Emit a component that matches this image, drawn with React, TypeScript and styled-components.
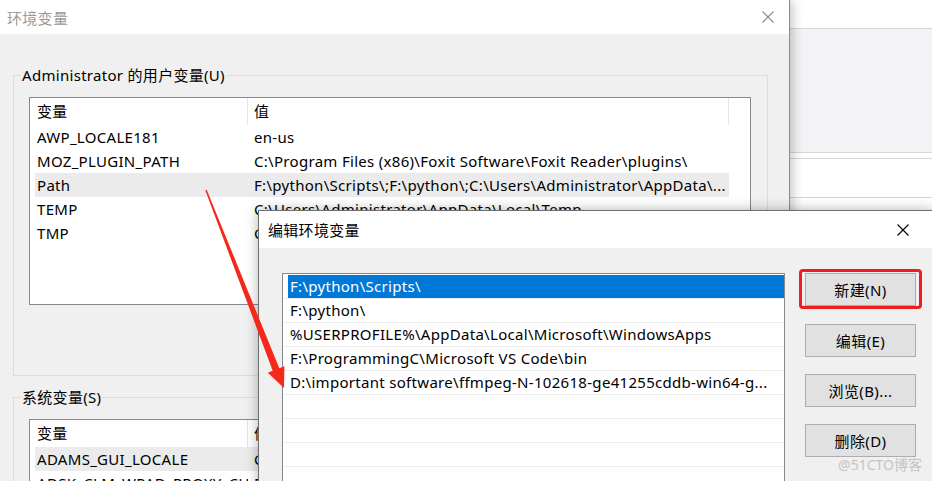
import React from 'react';
import styled, { createGlobalStyle } from 'styled-components';

const UI_FONT = `"Noto Sans", "Noto Sans CJK SC", sans-serif`;

const GlobalStyle = createGlobalStyle`
  html, body {
    margin: 0;
    padding: 0;
    background: #fff;
  }
  body {
    font-family: ${UI_FONT};
    font-size: 15px;
    letter-spacing: 0.3px;
    color: #000;
  }
  * {
    box-sizing: border-box;
  }
`;

const Desktop = styled.div`
  position: relative;
  width: 932px;
  height: 481px;
  overflow: hidden;
  background: #fff;
`;

/* window peeking out on the right, behind everything */
const BackWindow = styled.div`
  position: absolute;
  left: 760px;
  top: 0;
  width: 200px;
  height: 230px;
  background: #fff;
  display: flex;
  flex-direction: column;
`;

const BackStrip = styled.div<{ $h: number; $bg?: string }>`
  flex-shrink: 0;
  height: ${p => p.$h}px;
  background: ${p => p.$bg || '#fff'};
  border-bottom: 1px solid #d6d6d6;
`;

const MainWindow = styled.div`
  position: absolute;
  left: 0;
  top: 0;
  width: 790px;
  height: 530px;
  background: #f0f0f0;
  border-right: 1px solid #8a8a8a;
  box-shadow: 3px 0 10px rgba(0, 0, 0, 0.22);
  display: flex;
  flex-direction: column;
`;

const TitleBar = styled.div<{ $h: number; $inactive?: boolean; $pl: number; $pr: number }>`
  flex-shrink: 0;
  height: ${p => p.$h}px;
  background: #fff;
  display: flex;
  align-items: center;
  justify-content: space-between;
  padding: 0 ${p => p.$pr}px 0 ${p => p.$pl}px;
  color: ${p => (p.$inactive ? '#9a9a9a' : '#000')};
  font-size: 15px;
`;

const CloseIcon = ({ color }: { color: string }) => (
  <svg width="12" height="12" viewBox="0 0 12 12">
    <path d="M0.5 0.5 L11.5 11.5 M11.5 0.5 L0.5 11.5" stroke={color} strokeWidth="1.1" fill="none" />
  </svg>
);

const MainBody = styled.div`
  flex: 1;
  padding: 31px 0 0 13px;
  display: flex;
  flex-direction: column;
  gap: 11px;
`;

const GroupBox = styled.fieldset<{ $pb: number }>`
  margin: 0;
  width: 755px;
  min-inline-size: 0;
  border: 1px solid #dcdcdc;
  padding: 12px 16px ${p => p.$pb}px 15px;
`;

const GroupTitle = styled.legend`
  padding: 0 2px;
  margin-left: -9px;
  line-height: 20px;
  font-size: 15px;
`;

const ListView = styled.div<{ $h: number }>`
  width: 722px;
  height: ${p => p.$h}px;
  background: #fff;
  border: 1px solid #828790;
  overflow: hidden;
`;

const HeaderRow = styled.div`
  display: grid;
  grid-template-columns: 218px 481px 1fr;
  height: 27px;
`;

const HeaderCell = styled.div<{ $pl: number }>`
  padding-left: ${p => p.$pl}px;
  line-height: 27px;
  border-right: 1px solid #e5e5e5;
  &:last-child {
    border-right: none;
  }
`;

const VarRow = styled.div<{ $selected?: boolean }>`
  display: grid;
  grid-template-columns: 213px 1fr;
  margin-left: 5px;
  width: 694px;
  height: 24px;
  line-height: 24px;
  background: ${p => (p.$selected ? '#ebebeb' : 'transparent')};
`;

const VarCell = styled.div<{ $pl: number }>`
  padding-left: ${p => p.$pl}px;
  white-space: nowrap;
  overflow: hidden;
`;

/* front dialog */
const EditDialog = styled.div`
  position: absolute;
  left: 258px;
  top: 210px;
  width: 676px;
  height: 300px;
  background: #f0f0f0;
  border: 1px solid #6f6f6f;
  box-shadow: 0 0 12px rgba(0, 0, 0, 0.3);
  display: flex;
  flex-direction: column;
`;

const EditBody = styled.div`
  flex: 1;
  display: flex;
  gap: 20px;
  padding: 25px 0 0 23px;
`;

const PathList = styled.div`
  width: 503px;
  height: 240px;
  background: #fff;
  border: 1px solid #828790;
  padding-top: 1px;
`;

const PathRow = styled.div`
  height: 24px;
  border-bottom: 1px solid #ececec;
`;

const PathText = styled.div<{ $selected?: boolean }>`
  margin-left: 5px;
  height: 23px;
  line-height: 23px;
  padding-left: 2px;
  white-space: nowrap;
  overflow: hidden;
  background: ${p => (p.$selected ? '#0078d7' : 'transparent')};
  color: ${p => (p.$selected ? '#fff' : '#000')};
`;

const ButtonColumn = styled.div`
  display: flex;
  flex-direction: column;
  gap: 17px;
`;

const DialogButton = styled.button<{ $marked?: boolean }>`
  position: relative;
  width: 111px;
  height: 33px;
  padding: 0;
  background: #e1e1e1;
  border: 1px solid #adadad;
  font-family: ${UI_FONT};
  font-size: 15px;
  letter-spacing: 0.4px;
  color: #000;
  &:first-child {
    margin-bottom: 1px;
  }
  ${p =>
    p.$marked &&
    `
    &::after {
      content: '';
      position: absolute;
      top: -5px;
      left: -7px;
      right: -7px;
      bottom: -4px;
      border: 3px solid #f21c1c;
      border-radius: 4px;
    }
  `}
`;

const Watermark = styled.div`
  position: absolute;
  right: 10px;
  top: 454px;
  font-size: 14px;
  letter-spacing: 0;
  color: #c4c4c4;
`;

const Annotation = styled.svg`
  position: absolute;
  left: 0;
  top: 0;
  pointer-events: none;
`;

const userVars = [
  { name: 'AWP_LOCALE181', value: 'en-us' },
  { name: 'MOZ_PLUGIN_PATH', value: 'C:\\Program Files (x86)\\Foxit Software\\Foxit Reader\\plugins\\' },
  { name: 'Path', value: 'F:\\python\\Scripts\\;F:\\python\\;C:\\Users\\Administrator\\AppData\\...', selected: true },
  { name: 'TEMP', value: 'C:\\Users\\Administrator\\AppData\\Local\\Temp' },
  { name: 'TMP', value: 'C:\\Users\\Administrator\\AppData\\Local\\Temp' },
];

const systemVars = [
  { name: 'ADAMS_GUI_LOCALE', value: 'CHS', selected: true },
  { name: 'ADSK_CLM_WPAD_PROXY_CHECK', value: 'FALSE' },
];

const paths = [
  'F:\\python\\Scripts\\',
  'F:\\python\\',
  '%USERPROFILE%\\AppData\\Local\\Microsoft\\WindowsApps',
  'F:\\ProgrammingC\\Microsoft VS Code\\bin',
  'D:\\important software\\ffmpeg-N-102618-ge41255cddb-win64-g...',
  '',
  '',
  '',
  '',
];

const VarTable = ({ rows, height }: { rows: { name: string; value: string; selected?: boolean }[]; height: number }) => (
  <ListView $h={height}>
    <HeaderRow>
      <HeaderCell $pl={7}>变量</HeaderCell>
      <HeaderCell $pl={6}>值</HeaderCell>
      <HeaderCell $pl={0} />
    </HeaderRow>
    {rows.map(r => (
      <VarRow key={r.name} $selected={r.selected}>
        <VarCell $pl={2}>{r.name}</VarCell>
        <VarCell $pl={6}>{r.value}</VarCell>
      </VarRow>
    ))}
  </ListView>
);

export default function App() {
  return (
    <Desktop>
      <GlobalStyle />

      <BackWindow>
        <BackStrip $h={29} />
        <BackStrip $h={124} $bg="#f3f3f5" />
        <BackStrip $h={6} />
        <BackStrip $h={39} />
      </BackWindow>

      <MainWindow>
        <TitleBar $h={34} $inactive $pl={7} $pr={15}>
          <span>环境变量</span>
          <CloseIcon color="#8c8c8c" />
        </TitleBar>
        <MainBody>
          <GroupBox $pb={70}>
            <GroupTitle>Administrator 的用户变量(U)</GroupTitle>
            <VarTable rows={userVars} height={208} />
          </GroupBox>
          <GroupBox $pb={40}>
            <GroupTitle>系统变量(S)</GroupTitle>
            <VarTable rows={systemVars} height={120} />
          </GroupBox>
        </MainBody>
      </MainWindow>

      <EditDialog>
        <TitleBar $h={37} $pl={9} $pr={24}>
          <span>编辑环境变量</span>
          <CloseIcon color="#000" />
        </TitleBar>
        <EditBody>
          <PathList>
            {paths.map((p, i) => (
              <PathRow key={i}>
                <PathText $selected={i === 0}>{p}</PathText>
              </PathRow>
            ))}
          </PathList>
          <ButtonColumn>
            <DialogButton $marked>新建(N)</DialogButton>
            <DialogButton>编辑(E)</DialogButton>
            <DialogButton>浏览(B)...</DialogButton>
            <DialogButton>删除(D)</DialogButton>
          </ButtonColumn>
        </EditBody>
      </EditDialog>

      <Annotation width="932" height="481" viewBox="0 0 932 481">
        <polygon
          points="206.7,189.7 279.3,368.2 284.4,366.2 284,388 267.8,372.8 272.7,370.8 205.3,190.3"
          fill="#f5281c"
        />
      </Annotation>

      <Watermark>@51CTO博客</Watermark>
    </Desktop>
  );
}
